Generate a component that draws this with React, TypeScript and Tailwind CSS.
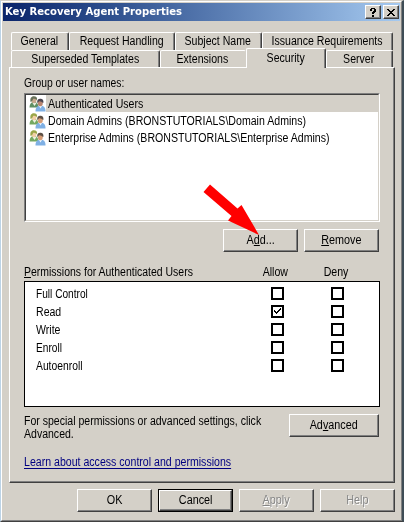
import React from "react";

const face =
  "bg-[#d4d0c8] border border-t-white border-l-white border-r-[#404040] border-b-[#404040] shadow-[inset_-1px_-1px_0_#808080]";

function Label({
  children,
  className = "",
  scale = "scale-x-[.882]",
}: {
  children: React.ReactNode;
  className?: string;
  scale?: string;
}) {
  return <span className={`block origin-left whitespace-nowrap ${scale} ${className}`}>{children}</span>;
}

function Button({
  children,
  className = "w-[75px]",
  isDefault = false,
  disabled = false,
}: {
  children: React.ReactNode;
  className?: string;
  isDefault?: boolean;
  disabled?: boolean;
}) {
  return (
    <button
      className={`flex h-[23px] shrink-0 ${isDefault ? "border border-black" : ""} ${className}`}
    >
      <span className={`flex h-full w-full items-center justify-center pb-px ${face}`}>
        <span
          className={`block origin-center scale-x-[.9] whitespace-nowrap ${
            disabled ? "text-[#868686] [text-shadow:1px_1px_0_#fff]" : ""
          }`}
        >
          {children}
        </span>
      </span>
    </button>
  );
}

function Tab({ children, className = "" }: { children: React.ReactNode; className?: string }) {
  return (
    <div
      className={`flex shrink-0 justify-center rounded-t-[2px] border-t border-l border-r border-t-white border-l-white border-r-[#404040] bg-[#d4d0c8] pr-px ${className}`}
    >
      <span className="block origin-center scale-x-[.88] whitespace-nowrap">{children}</span>
    </div>
  );
}

const tabEdge = "shadow-[inset_-1px_0_0_#808080]";

function UsersIcon({ selected = false }: { selected?: boolean }) {
  return (
    <svg width="17" height="16" viewBox="0 0 17 16" className="block shrink-0">
      <path d="M.5 11.500C.5 8 2 6 5 6s4.500 2 4.500 5.500z" fill={selected ? "#5f8f62" : "#74a862"} />
      <path d="M3.500 7l2 3 2-3z" fill="#eef4e6" />
      <ellipse cx="5" cy="4.300" rx="2.400" ry="3" fill={selected ? "#c9aa8c" : "#f0cfa5"} />
      <path
        d="M1.600 6C.8 2.500 2.200.3 4.800.3S8.500 2 8 4C6.500 3.200 5 2.600 4.200 2.800 3.600 4 3.300 6 1.600 6z"
        fill={selected ? "#69735a" : "#9aa648"}
      />
      <path d="M6.500 15.500c0-4 1.500-5.700 5-5.700s5 1.700 5 5.700z" fill="#7fb0e4" />
      <path d="M10 10l1.500 2.500L13 10z" fill="#eef6fd" />
      <ellipse cx="11.300" cy="7" rx="2.500" ry="3.200" fill={selected ? "#b98570" : "#d79e77"} />
      <path
        d="M8.300 7C7.800 4 9 2.800 11.200 2.800S15 4.200 14.300 7c-1.300-.8-3-2-4.200-1.700C9.200 6 9.100 7 8.300 7z"
        fill={selected ? "#4b4650" : "#5d5045"}
      />
    </svg>
  );
}

function Checkbox({ checked = false }: { checked?: boolean }) {
  return (
    <span className="flex h-[13px] w-[13px] shrink-0 items-center justify-center border-2 border-black bg-white">
      {checked && (
        <svg width="9" height="9" viewBox="0 0 9 9" shapeRendering="crispEdges" className="block">
          <path d="M1 3h1v1h1v1h1V4h1V3h1V2h1V1h1v2H7v1H6v1H5v1H4v1H3V6H2V5H1z" fill="#000" />
        </svg>
      )}
    </span>
  );
}

const users = [
  "Authenticated Users",
  "Domain Admins (BRONSTUTORIALS\\Domain Admins)",
  "Enterprise Admins (BRONSTUTORIALS\\Enterprise Admins)",
];

const permissions = [
  { name: "Full Control", allow: false, scale: "scale-x-[.845]" },
  { name: "Read", allow: true, scale: "scale-x-[.88]" },
  { name: "Write", allow: false, scale: "scale-x-[.88]" },
  { name: "Enroll", allow: false, scale: "scale-x-[.845]" },
  { name: "Autoenroll", allow: false, scale: "scale-x-[.86]" },
];

export default function App() {
  return (
    <div className="relative h-[522px] w-[404px] overflow-hidden border-t border-l border-r-2 border-b border-t-[#d4d0c8] border-l-[#bcd3e6] border-r-[#3f4d56] border-b-[#404040] bg-[#d4d0c8] font-['Liberation_Sans',Arial,sans-serif] text-[12px] leading-[14px] text-black">
      <div className="flex h-[520px] flex-col border-t border-l border-r border-b border-t-white border-l-white border-r-[#808080] border-b-[#808080] px-px pt-px">
        {/* Title bar */}
        <div className="flex h-[18px] shrink-0 items-center bg-linear-to-r from-[#0a246a] to-[#a6caf0] pr-px pl-[2px]">
          <span className="block origin-left scale-x-[.915] whitespace-nowrap font-['DejaVu_Sans',sans-serif] text-[11px] font-bold text-white">
            Key Recovery Agent Properties
          </span>
          <div className="ml-auto flex gap-[2px]">
            <div className={`flex h-[14px] w-4 items-center justify-center ${face}`}>
              <svg width="8" height="9" viewBox="0 0 8 9" shapeRendering="crispEdges">
                <path d="M1 1h1V0h4v1h1v3H6v1H5v1H3V4h1V3h1V1H3v2H1zM3 7h2v2H3z" />
              </svg>
            </div>
            <div className={`flex h-[14px] w-4 items-center justify-center ${face}`}>
              <svg width="8" height="7" viewBox="0 0 8 7" shapeRendering="crispEdges">
                <path d="M0 0h2v1h1v1h2V1h1V0h2v1H7v1H6v1H5v1h1v1h1v1h1v1H6V6H5V5H3v1H2v1H0V6h1V5h1V4h1V3H2V2H1V1H0z" />
              </svg>
            </div>
          </div>
        </div>

        {/* Tabs */}
        <div className="mt-[11px] ml-[8px] flex h-[18px] shrink-0">
          <Tab className={`w-[58px] pt-px ${tabEdge}`}>General</Tab>
          <Tab className={`w-[106px] pt-px ${tabEdge}`}>Request Handling</Tab>
          <Tab className={`w-[87px] pt-px ${tabEdge}`}>Subject Name</Tab>
          <Tab className={`w-[131px] pt-px ${tabEdge}`}>Issuance Requirements</Tab>
        </div>
        <div className="ml-[8px] flex h-[17px] shrink-0 items-end">
          <Tab className={`h-[17px] w-[149px] pt-px ${tabEdge}`}>Superseded Templates</Tab>
          <Tab className="h-[17px] w-[86px] border-r-transparent pt-px">Extensions</Tab>
          <Tab className={`z-10 -mb-px h-[20px] w-[80px] pt-[2px] ${tabEdge}`}>Security</Tab>
          <Tab className={`h-[17px] w-[67px] pt-px ${tabEdge}`}>Server</Tab>
        </div>

        {/* Tab page */}
        <div className="ml-[6px] flex h-[416px] w-[386px] shrink-0 flex-col border border-t-white border-l-white border-r-[#404040] border-b-[#404040] pr-[15px] pl-[14px] shadow-[inset_-1px_-1px_0_#808080]">
          <Label className="mt-[8px]" scale="scale-x-[.86]">
            Group or user names:
          </Label>
          <div className="mt-[3px] h-[129px] w-[356px] shrink-0 border border-t-[#808080] border-r-white border-b-white border-l-[#808080]">
            <div className="h-full border border-t-[#404040] border-r-[#d4d0c8] border-b-[#d4d0c8] border-l-[#404040] bg-white">
              {users.map((user, i) => (
                <div key={user} className="flex h-[17px] items-center pl-[3px]">
                  <UsersIcon selected={i === 0} />
                  <div className={`flex h-full grow items-center pl-[2px] ${i === 0 ? "bg-[#d4d0c8]" : ""}`}>
                    <Label>{user}</Label>
                  </div>
                </div>
              ))}
            </div>
          </div>
          <div className="mt-[7px] flex justify-end gap-[6px]">
            <Button>
              A<u>d</u>d...
            </Button>
            <Button>
              <u>R</u>emove
            </Button>
          </div>

          <div className="mt-[13px] flex h-[16px]">
            <Label className="w-[236px]" scale="scale-x-[.873]">
              <u>P</u>ermissions for Authenticated Users
            </Label>
            <Label className="w-[61px] pl-[3px]">Allow</Label>
            <Label className="pl-[3px]">Deny</Label>
          </div>
          <div className="flex h-[126px] w-[356px] shrink-0 flex-col border border-black bg-white pt-[2px]">
            {permissions.map((p) => (
              <div key={p.name} className="flex h-[18px] items-center">
                <div className="w-[246px] pt-[2px] pl-[11px]">
                  <Label scale={p.scale}>{p.name}</Label>
                </div>
                <Checkbox checked={p.allow} />
                <div className="w-[47px]" />
                <Checkbox />
              </div>
            ))}
          </div>
          <div className="mt-[7px] flex justify-between">
            <Label className="w-[250px] pt-px leading-[13px]" scale="scale-x-[.878]">
              For special permissions or advanced settings, click
              <br />
              Advanced.
            </Label>
            <Button className="w-[90px]">
              Ad<u>v</u>anced
            </Button>
          </div>
          <Label className="mt-[14px] self-start text-[#000080] underline underline-offset-2">
            Learn about access control and permissions
          </Label>
        </div>

        {/* Dialog buttons */}
        <div className="mt-[6px] mr-[5px] flex justify-end gap-[6px]">
          <Button>OK</Button>
          <Button isDefault>Cancel</Button>
          <Button disabled>
            <u>A</u>pply
          </Button>
          <Button disabled>Help</Button>
        </div>
      </div>

      {/* Pointer arrow over the Add button */}
      <svg className="absolute top-0 left-0 z-20" width="401" height="520" viewBox="1 1 401 520">
        <path d="M210 184.500L237.500 208.500L241.500 205L259 235L228 220.500L231.500 216L203.500 192Z" fill="#f00" />
      </svg>
    </div>
  );
}
